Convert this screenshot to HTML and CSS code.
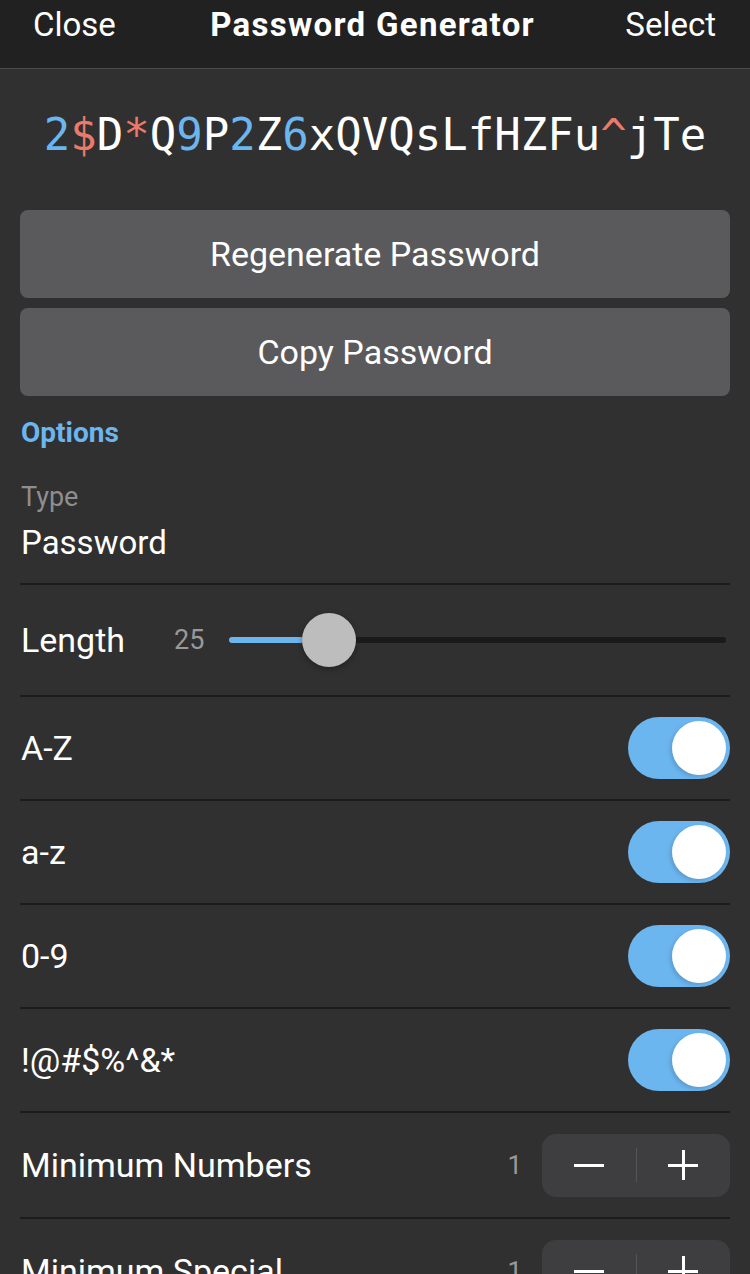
FILE: index.html
```html
<!DOCTYPE html>
<html>
<head>
<meta charset="utf-8">
<link rel="stylesheet" href="styles.css">
</head>
<body>
<header class="nav">
  <span class="nav-btn">Close</span>
  <span class="nav-title">Password Generator</span>
  <span class="nav-btn">Select</span>
</header>
<main class="content">
  <div class="password"><span class="num">2</span><span class="sym">$</span>D<span class="sym">*</span>Q<span class="num">9</span>P<span class="num">2</span>Z<span class="num">6</span>xQVQsLfHZFu<span class="sym">^</span>jTe</div>
  <div class="buttons">
    <div class="btn">Regenerate Password</div>
    <div class="btn">Copy Password</div>
  </div>
  <div class="section-title">Options</div>
  <div class="row type-row">
    <div class="type-label">Type</div>
    <div class="type-value">Password</div>
  </div>
  <div class="row length-row">
    <span class="label len-label">Length</span>
    <span class="value len-value">25</span>
    <div class="slider">
      <div class="track-fill"></div>
      <div class="thumb"></div>
      <div class="track-rest"></div>
    </div>
  </div>
  <div class="row"><span class="label">A-Z</span><div class="toggle"><div class="knob"></div></div></div>
  <div class="row"><span class="label">a-z</span><div class="toggle"><div class="knob"></div></div></div>
  <div class="row"><span class="label">0-9</span><div class="toggle"><div class="knob"></div></div></div>
  <div class="row"><span class="label">!@#$%^&amp;*</span><div class="toggle"><div class="knob"></div></div></div>
  <div class="row step-row">
    <span class="label">Minimum Numbers</span>
    <span class="value step-value">1</span>
    <div class="stepper"><span class="step"><span class="minus"></span></span><span class="step-sep"></span><span class="step"><span class="plus"></span></span></div>
  </div>
  <div class="row step-row">
    <span class="label">Minimum Special</span>
    <span class="value step-value">1</span>
    <div class="stepper"><span class="step"><span class="minus"></span></span><span class="step-sep"></span><span class="step"><span class="plus"></span></span></div>
  </div>
</main>
</body>
</html>
```
FILE: styles.css
```css
* { box-sizing: border-box; }
html, body { margin: 0; padding: 0; }
body {
  background: #303030;
  color: #ffffff;
  font-family: Roboto, "Liberation Sans", sans-serif;
  width: 750px;
  height: 1274px;
  overflow: hidden;
}
.nav {
  height: 69px;
  background: #212121;
  border-bottom: 1px solid #4a4a4a;
  display: flex;
  align-items: center;
  justify-content: space-between;
  padding: 0 34px 20px 33px;
}
.nav-btn { font-size: 33px; }
.nav-title { font-size: 33px; font-weight: 700; letter-spacing: 1.3px; padding-left: 4px; }
.content { padding: 0 20px; }
.password {
  font-family: "DejaVu Sans Mono", monospace;
  font-size: 44px;
  text-align: center;
  height: 141px;
  line-height: 132px;
}
.password .num { color: #6cb6f0; }
.password .sym { color: #ec7a6c; }
.buttons { display: flex; flex-direction: column; gap: 10px; }
.btn {
  height: 88px;
  background: #5a5a5c;
  border-radius: 8px;
  display: flex;
  align-items: center;
  justify-content: center;
  font-size: 34px;
}
.section-title {
  color: #6cb6f0;
  font-weight: 700;
  font-size: 28px;
  margin-top: 22px;
  height: 40px;
  line-height: 30px;
  padding-left: 1px;
}
.row {
  height: 104px;
  border-bottom: 2px solid #1c1c1c;
  display: flex;
  align-items: center;
}
.type-row {
  flex-direction: column;
  align-items: flex-start;
  justify-content: flex-start;
  height: 127px;
  padding-top: 24px;
}
.type-label { color: #8e8e8e; font-size: 27px; line-height: 30px; padding-left: 1px; }
.type-value { font-size: 33px; line-height: 36px; margin-top: 13px; padding-left: 1px; }
.length-row { height: 112px; }
.step-row { height: 106px; }
.label { font-size: 34px; flex: 1 1 auto; padding-left: 1px; }
.value { color: #999; font-size: 27px; }
.len-label { flex: 0 0 auto; width: 154px; }
.len-value { flex: 0 0 auto; margin-right: 25px; }
.slider {
  flex: 1 1 auto;
  display: flex;
  align-items: center;
  margin-right: 4px;
}
.track-fill { width: 73px; height: 6px; background: #6cb6f0; border-radius: 3px 0 0 3px; }
.thumb {
  width: 54px; height: 54px; border-radius: 50%;
  background: #bdbdbd;
  box-shadow: 0 2px 6px rgba(0,0,0,0.3);
  flex: 0 0 auto;
}
.track-rest { flex: 1; height: 6px; background: #1a1a1a; border-radius: 0 3px 3px 0; }
.toggle {
  width: 102px; height: 62px; border-radius: 31px;
  background: #6cb6f0;
  display: flex; align-items: center; justify-content: flex-end;
  padding-right: 4px;
  flex: 0 0 auto;
}
.knob {
  width: 54px; height: 54px; border-radius: 50%;
  background: #ffffff;
  box-shadow: -2px 2px 4px rgba(0,0,0,0.15);
}
.step-value { margin-right: 20px; font-size: 26px; }
.stepper {
  width: 188px; height: 63px;
  background: #3e3e40;
  border-radius: 14px;
  display: flex; align-items: center;
  flex: 0 0 auto;
}
.step {
  flex: 1;
  display: flex; align-items: center; justify-content: center;
  height: 63px;
}
.minus { display: block; width: 30px; height: 3px; background: #fff; }
.plus { display: block; width: 30px; height: 30px; position: relative; }
.plus::before, .plus::after { content: ""; position: absolute; background: #fff; }
.plus::before { left: 0; top: 13.5px; width: 30px; height: 3px; }
.plus::after { top: 0; left: 13.5px; width: 3px; height: 30px; }
.step-sep { width: 1px; height: 34px; background: #555; }
```
